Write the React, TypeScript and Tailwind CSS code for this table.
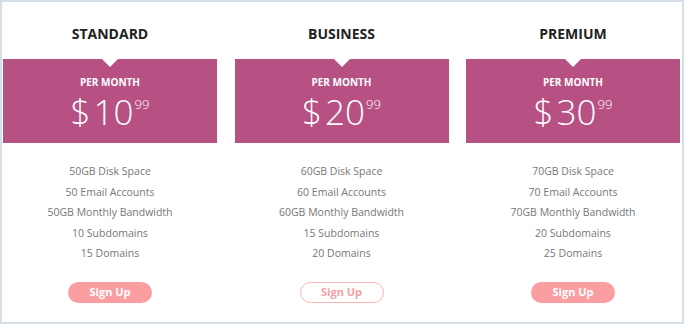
const plans = [
  { name: 'STANDARD', price: '10', gb: '50', email: '50', sub: '10', dom: '15', outline: false },
  { name: 'BUSINESS', price: '20', gb: '60', email: '60', sub: '15', dom: '20', outline: true },
  { name: 'PREMIUM', price: '30', gb: '70', email: '70', sub: '20', dom: '25', outline: false },
]

function PlanCard({ plan }: { plan: (typeof plans)[number] }) {
  return (
    <div className="w-[214px] flex flex-col items-center">
      {/* Title */}
      <div className="pt-[22px] h-[57px] text-[14px] leading-[20px] font-bold text-[#222]">{plan.name}</div>

      {/* Price box */}
      <div className="relative w-full h-[84px] bg-[#b75184] flex flex-col items-center text-white">
        <div className="absolute top-0 left-1/2 -translate-x-1/2 w-0 h-0 border-l-[8px] border-r-[8px] border-t-[8px] border-l-transparent border-r-transparent border-t-white" />
        <div className="mt-[16px] text-[10px] leading-[14px] font-bold">PER MONTH</div>
        <div className="mt-[1px] flex items-start font-light">
          <span className="text-[35px] leading-[44px]">$</span>
          <span className="ml-[3px] text-[35px] leading-[44px]">{plan.price}</span>
          <span className="ml-px mt-[6px] text-[13px] leading-[16px]">99</span>
        </div>
      </div>

      {/* Features */}
      <div className="mt-[18px] flex flex-col items-center text-[10.5px] leading-[20.5px] text-[#777]">
        <div>{plan.gb}GB Disk Space</div>
        <div>{plan.email} Email Accounts</div>
        <div>{plan.gb}GB Monthly Bandwidth</div>
        <div>{plan.sub} Subdomains</div>
        <div>{plan.dom} Domains</div>
      </div>

      {/* Button */}
      <button
        className={`mt-[18px] w-[84px] h-[21px] rounded-full text-[11px] font-bold flex items-center justify-center ${
          plan.outline ? 'bg-white border-[1.5px] border-[#fcb3b6] text-[#f99ea2]' : 'bg-[#fb9ea2] text-white'
        }`}
      >
        Sign Up
      </button>
    </div>
  )
}

export default function App() {
  return (
    <div className="w-[685px] h-[326px] bg-white" style={{ fontFamily: '"Open Sans", "Liberation Sans", sans-serif' }}>
      <div className="w-[684px] h-[324px] border-2 border-[#d5dde6] pl-px pr-[2px] flex justify-between">
        {plans.map(p => (
          <PlanCard key={p.name} plan={p} />
        ))}
      </div>
    </div>
  )
}
